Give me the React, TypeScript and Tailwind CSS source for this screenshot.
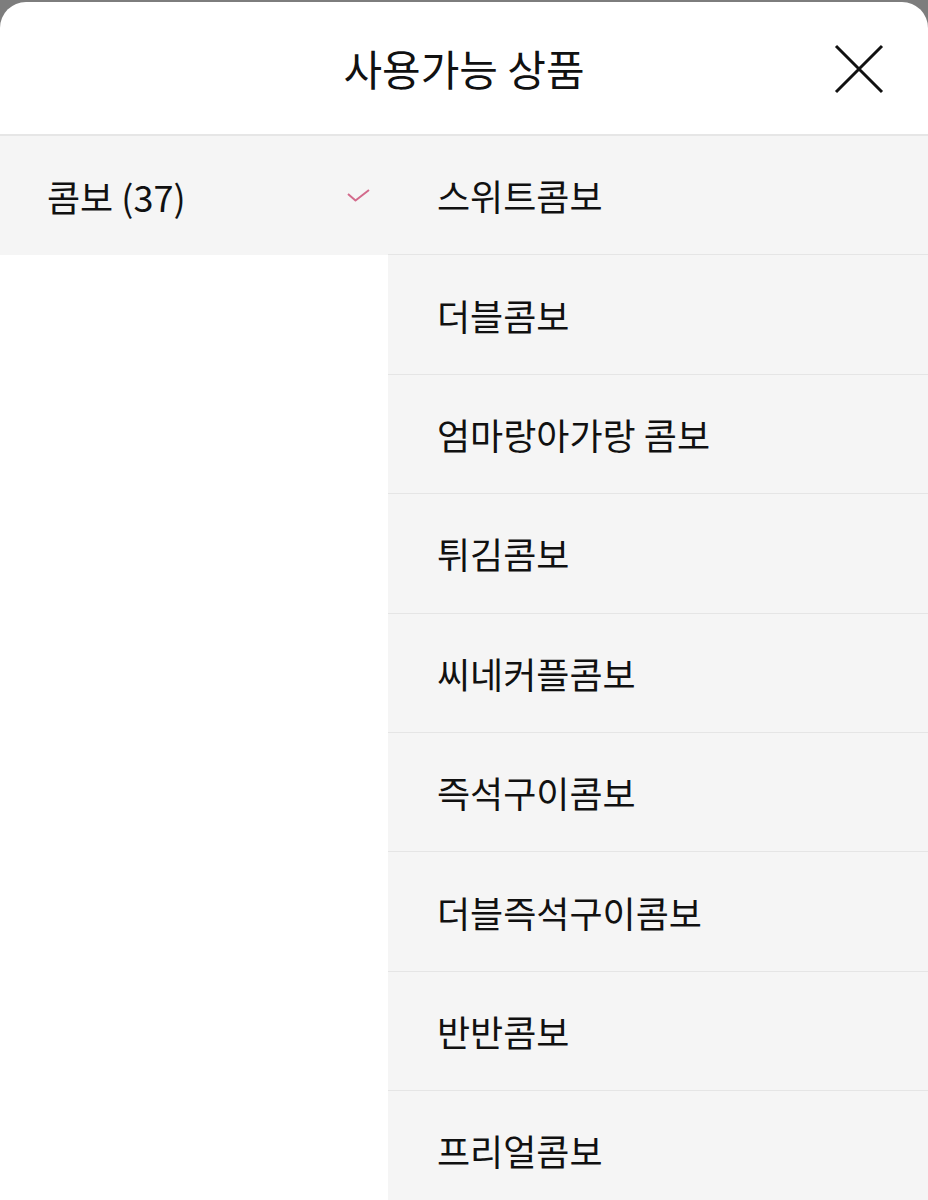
import React from "react";

const items = [
  "스위트콤보",
  "더블콤보",
  "엄마랑아가랑 콤보",
  "튀김콤보",
  "씨네커플콤보",
  "즉석구이콤보",
  "더블즉석구이콤보",
  "반반콤보",
  "프리얼콤보",
];

export default function App() {
  return (
    <div
      className="w-[928px] h-[1200px] overflow-hidden bg-[#7d7d7d] pt-[2px]"
      style={{ fontFamily: '"Noto Sans CJK KR", "Noto Sans", sans-serif' }}
    >
      <div className="h-full bg-white rounded-t-[26px] overflow-hidden flex flex-col">
        <div className="h-[134px] shrink-0 relative flex items-center justify-center border-b-2 border-[#e6e6e6]">
          <span className="text-[42px] text-[#111] leading-none">사용가능 상품</span>
          <button className="absolute right-[44px] top-[42px] w-[50px] h-[50px] flex items-center justify-center">
            <svg width="50" height="50" viewBox="0 0 50 50" fill="none">
              <path d="M2 2 L48 48 M48 2 L2 48" stroke="#111" strokeWidth="3" />
            </svg>
          </button>
        </div>
        <div className="flex flex-1">
          <div className="w-[388px] shrink-0">
            <div className="h-[119px] bg-[#f5f5f5] flex items-center justify-between pl-[47px] pr-[17px]">
              <span className="text-[36px] text-[#111] leading-none">콤보 (37)</span>
              <svg width="25" height="17" viewBox="0 0 25 17" fill="none" className="-mt-[1px]">
                <path d="M2 7 L9.5 13.5 L23 3" stroke="#d36b8c" strokeWidth="2" strokeLinejoin="round" />
              </svg>
            </div>
          </div>
          <div className="flex-1 bg-[#f5f5f5]">
            {items.map((t, i) => (
              <div
                key={i}
                className="h-[119.4px] flex items-center pl-[49px] border-b-[1.5px] border-[#e5e5e5]"
              >
                <span className="text-[36px] text-[#111] leading-none">{t}</span>
              </div>
            ))}
          </div>
        </div>
      </div>
    </div>
  );
}
